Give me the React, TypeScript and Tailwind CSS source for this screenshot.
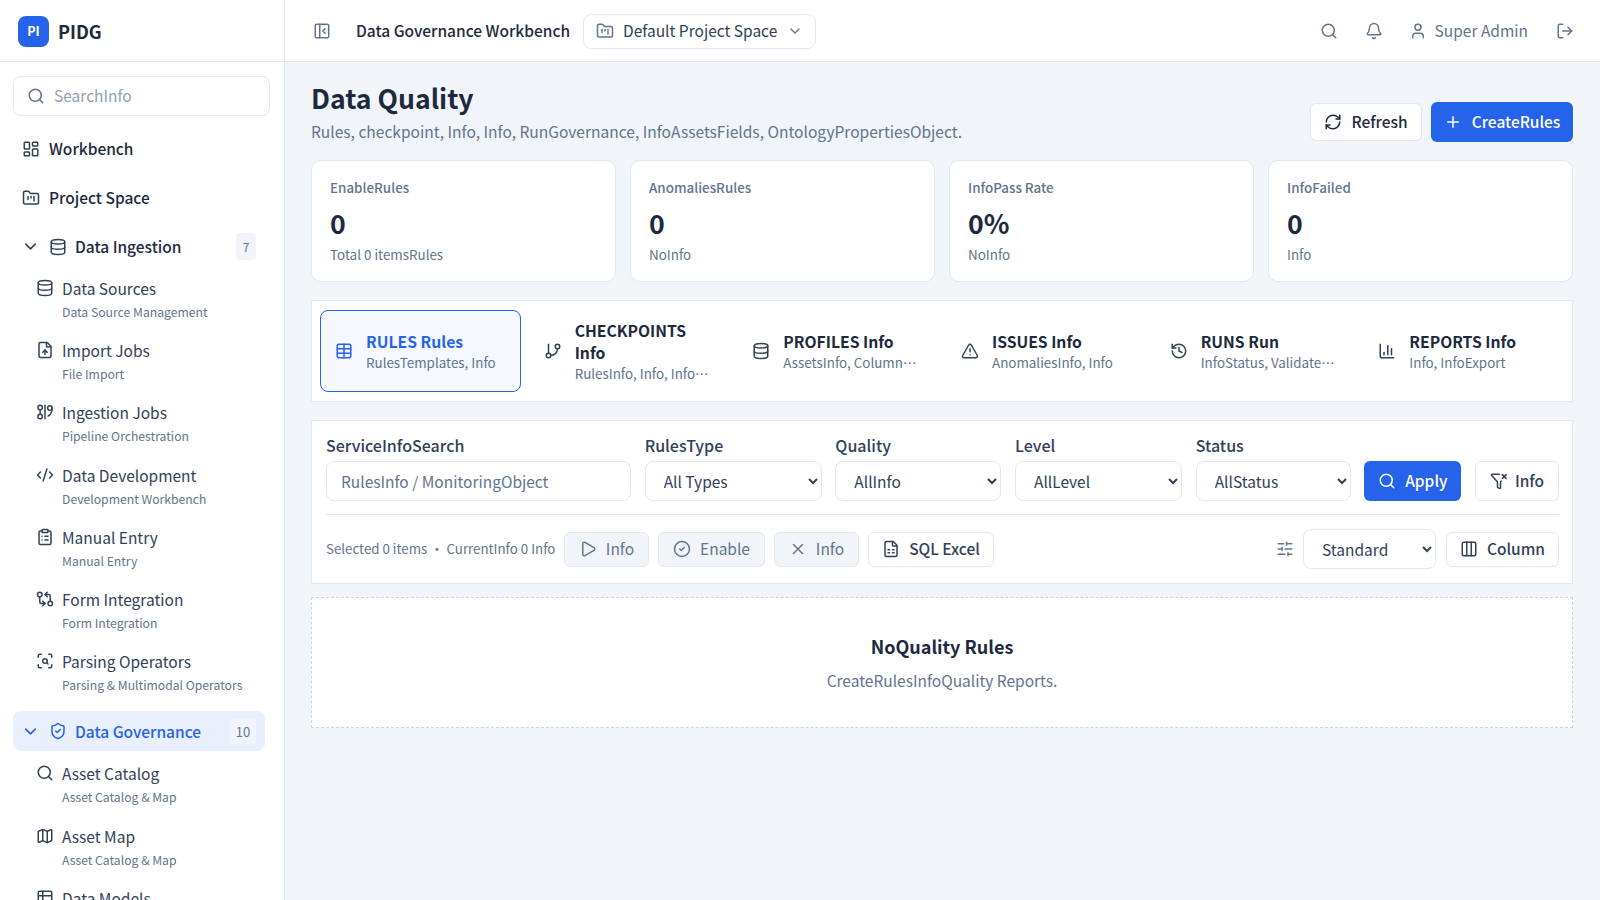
import {
  Bell,
  ChartColumn,
  ChevronDown,
  CircleCheck,
  ClipboardList,
  CodeXml,
  Columns3,
  Database,
  FileSpreadsheet,
  FileUp,
  FolderKanban,
  FunnelX,
  GitBranch,
  GitCompareArrows,
  History,
  LayoutDashboard,
  LogOut,
  Map,
  PanelLeftClose,
  Play,
  Plus,
  RefreshCw,
  ScanSearch,
  Search,
  ShieldCheck,
  SlidersHorizontal,
  Table,
  Table2,
  TriangleAlert,
  User,
  X,
} from "lucide-react";
import type { SVGProps } from "react";

const font = { fontFamily: '"Noto Sans CJK SC", "Noto Sans", sans-serif' };

// not in lucide: two stacked nodes, a rule, and a single node with a tail
function PipelineIcon(props: SVGProps<SVGSVGElement>) {
  return (
    <svg viewBox="0 0 24 24" fill="none" stroke="currentColor" strokeWidth={2} strokeLinecap="round" strokeLinejoin="round" {...props}>
      <circle cx="5.5" cy="6" r="3" />
      <circle cx="5.5" cy="18" r="3" />
      <path d="M5.5 9v6" />
      <path d="M12 3v18" />
      <circle cx="18.5" cy="6.5" r="3" />
      <path d="M21.5 6.5c0 6-2 9-5.500 11" />
    </svg>
  );
}

const ingestionItems = [
  { icon: Database, name: "Data Sources", sub: "Data Source Management" },
  { icon: FileUp, name: "Import Jobs", sub: "File Import" },
  { icon: PipelineIcon, name: "Ingestion Jobs", sub: "Pipeline Orchestration" },
  { icon: CodeXml, name: "Data Development", sub: "Development Workbench" },
  { icon: ClipboardList, name: "Manual Entry", sub: "Manual Entry" },
  { icon: GitCompareArrows, name: "Form Integration", sub: "Form Integration" },
  { icon: ScanSearch, name: "Parsing Operators", sub: "Parsing & Multimodal Operators" },
];

const governanceItems = [
  { icon: Search, name: "Asset Catalog", sub: "Asset Catalog & Map" },
  { icon: Map, name: "Asset Map", sub: "Asset Catalog & Map" },
  { icon: Table2, name: "Data Models", sub: "Data Models" },
];

const stats = [
  { label: "EnableRules", value: "0", sub: "Total 0 itemsRules" },
  { label: "AnomaliesRules", value: "0", sub: "NoInfo" },
  { label: "InfoPass Rate", value: "0%", sub: "NoInfo" },
  { label: "InfoFailed", value: "0", sub: "Info" },
];

const tabs = [
  { icon: Table, title: "RULES Rules", sub: "RulesTemplates, Info", active: true },
  { icon: GitBranch, title: "CHECKPOINTS Info", sub: "RulesInfo, Info, Info, Info" },
  { icon: Database, title: "PROFILES Info", sub: "AssetsInfo, ColumnInfo, Info" },
  { icon: TriangleAlert, title: "ISSUES Info", sub: "AnomaliesInfo, Info" },
  { icon: History, title: "RUNS Run", sub: "InfoStatus, Validate Info, Info" },
  { icon: ChartColumn, title: "REPORTS Info", sub: "Info, InfoExport" },
];

const filters = [
  { label: "RulesType", value: "All Types", width: "w-[177px]" },
  { label: "Quality", value: "AllInfo", width: "w-[166px]" },
  { label: "Level", value: "AllLevel", width: "w-[167px]" },
  { label: "Status", value: "AllStatus", width: "w-[155px]" },
];

function SubItem({ item }: { item: (typeof ingestionItems)[number] }) {
  const Icon = item.icon;
  return (
    <div className="h-[62.2px] pl-[36px] flex gap-[8px]">
      <Icon className="w-[18px] h-[18px] mt-[5px] text-slate-700 shrink-0" />
      <div>
        <div className="text-[15.5px] leading-[28px] text-slate-700">{item.name}</div>
        <div className="text-[12.2px] leading-[18px] mt-[1px] text-slate-500">{item.sub}</div>
      </div>
    </div>
  );
}

function Sidebar() {
  return (
    <aside className="w-[285px] shrink-0 h-full bg-white border-r border-slate-200 overflow-hidden">
      <div className="h-[62px] pt-[1px] border-b border-slate-200 pl-[18px] flex items-center gap-[9px]">
        <div className="w-[31px] h-[31px] rounded-[8px] bg-[#2563eb] text-white text-[12.5px] font-bold flex items-center justify-center">
          PI
        </div>
        <span className="text-[18px] font-bold text-slate-800">PIDG</span>
      </div>
      <div className="pl-[13px] pt-[14px]">
        <div className="w-[257px] h-[40px] rounded-[8px] border border-slate-200 flex items-center gap-[9px] pl-[13px]">
          <Search className="w-[18px] h-[18px] text-slate-500" />
          <span className="text-[15.5px] text-slate-400">SearchInfo</span>
        </div>
      </div>
      <div className="pt-[8px]">
        <div className="h-[49px] pl-[22px] flex items-center gap-[9px] text-slate-800 text-[15.5px] font-medium">
          <LayoutDashboard className="w-[18px] h-[18px] text-slate-700" />
          Workbench
        </div>
        <div className="h-[49px] pl-[22px] flex items-center gap-[9px] text-slate-800 text-[15.5px] font-medium">
          <FolderKanban className="w-[18px] h-[18px] text-slate-700" />
          Project Space
        </div>
        <div className="h-[49px] pl-[21px] pr-[28px] flex items-center text-slate-800 text-[15.5px] font-medium">
          <ChevronDown className="w-[19px] h-[19px] mr-[9px] text-slate-700" />
          <Database className="w-[18px] h-[18px] mr-[8px] text-slate-700" />
          <span className="flex-1">Data Ingestion</span>
          <span className="w-[20px] h-[27px] rounded-[4px] bg-slate-100 text-[12px] font-normal text-slate-500 flex items-center justify-center">
            7
          </span>
        </div>
        <div className="pt-[3px]">
          {ingestionItems.map((item) => (
            <SubItem key={item.name} item={item} />
          ))}
        </div>
        <div className="mx-[13px] w-[252px] h-[40px] mt-[2px] mb-[8px] rounded-[8px] bg-[#e9effd] pl-[8px] pr-[9px] flex items-center text-[#2563eb] text-[15.5px] font-medium">
          <ChevronDown className="w-[19px] h-[19px] mr-[9px]" />
          <ShieldCheck className="w-[18px] h-[18px] mr-[8px]" />
          <span className="flex-1">Data Governance</span>
          <span className="w-[26px] h-[26px] rounded-[4px] bg-slate-100 text-[13px] font-normal text-slate-500 flex items-center justify-center">
            10
          </span>
        </div>
        {governanceItems.map((item) => (
          <SubItem key={item.name} item={item} />
        ))}
      </div>
    </aside>
  );
}

function TopBar() {
  return (
    <header className="h-[62px] pt-[1px] shrink-0 bg-white border-b border-slate-200 flex items-center pl-[28px] pr-[26px]">
      <PanelLeftClose className="w-[18px] h-[18px] text-slate-500" />
      <span className="ml-[25px] text-[15.5px] font-medium text-slate-800 whitespace-nowrap">Data Governance Workbench</span>
      <div className="ml-[13px] w-[233px] h-[35px] rounded-[8px] border border-slate-200 flex items-center pl-[12px] text-[15.5px] text-slate-700 whitespace-nowrap">
        <FolderKanban className="w-[18px] h-[18px] text-slate-500 mr-[9px]" />
        Default Project Space
        <ChevronDown className="w-[16px] h-[16px] text-slate-500 ml-[10px]" />
      </div>
      <div className="flex-1" />
      <Search className="w-[18px] h-[18px] text-slate-500" />
      <Bell className="w-[18px] h-[18px] text-slate-500 ml-[27px]" />
      <div className="ml-[26px] flex items-center gap-[8px] text-[15.5px] text-slate-500">
        <User className="w-[18px] h-[18px]" />
        Super Admin
      </div>
      <LogOut className="w-[18px] h-[18px] text-slate-500 ml-[28px]" />
    </header>
  );
}

function MutedButton({ icon: Icon, label, width }: { icon: typeof Play; label: string; width: string }) {
  return (
    <button className={`${width} h-[35px] rounded-[6px] border border-slate-200 bg-slate-100 text-slate-500 text-[15.5px] flex items-center justify-center gap-[9px]`}>
      <Icon className="w-[18px] h-[18px]" />
      {label}
    </button>
  );
}

export default function App() {
  return (
    <div className="w-full h-screen flex overflow-hidden bg-slate-100" style={font}>
      <Sidebar />
      <div className="flex-1 min-w-0 flex flex-col">
        <TopBar />
        <main className="pl-[26px] pr-[27px] pt-[14px]">
          <div className="flex items-start justify-between h-[84px]">
            <div>
              <h1 className="text-[26.6px] leading-[43px] font-bold text-slate-800">Data Quality</h1>
              <p className="text-[15.56px] leading-[24px] text-slate-500">
                Rules, checkpoint, Info, Info, RunGovernance, InfoAssetsFields, OntologyPropertiesObject.
              </p>
            </div>
            <div className="flex gap-[9px] items-center mt-[26px]">
              <button className="w-[112px] h-[38px] rounded-[6px] border border-slate-200 bg-white text-slate-800 text-[15.5px] font-medium flex items-center justify-center gap-[9px]">
                <RefreshCw className="w-[18px] h-[18px]" />
                Refresh
              </button>
              <button className="w-[142px] h-[40px] rounded-[6px] bg-[#2563eb] text-white text-[15.5px] font-medium flex items-center justify-center gap-[10px]">
                <Plus className="w-[18px] h-[18px]" />
                CreateRules
              </button>
            </div>
          </div>

          <div className="grid grid-cols-4 gap-[14px]">
            {stats.map((s) => (
              <div key={s.label} className="h-[122px] rounded-[10px] border border-slate-200 bg-white pl-[18px] pt-[16px]">
                <div className="text-[13.4px] leading-[20px] font-medium text-slate-500">{s.label}</div>
                <div className="text-[26.7px] leading-[40px] mt-[6px] font-bold text-slate-800">{s.value}</div>
                <div className="text-[13.4px] leading-[20px] mt-[1px] text-slate-500">{s.sub}</div>
              </div>
            ))}
          </div>

          <div className="mt-[18px] h-[102px] border border-slate-200 bg-white px-[8px] py-[9px] grid grid-cols-6 gap-[8px]">
            {tabs.map((t) => {
              const Icon = t.icon;
              return (
                <div
                  key={t.title}
                  className={
                    t.active
                      ? "rounded-[8px] border border-[#2563eb] bg-[#f5f8ff] pl-[14px] pr-[18px] flex items-center gap-[13px] min-w-0"
                      : "rounded-[8px] border border-transparent pl-[14px] pr-[18px] flex items-center gap-[13px] min-w-0"
                  }
                >
                  <Icon className={t.active ? "w-[18px] h-[18px] shrink-0 text-[#2563eb]" : "w-[18px] h-[18px] shrink-0 text-slate-700"} />
                  <div className="min-w-0">
                    <div className={t.active ? "text-[15.7px] leading-[22px] font-semibold text-[#2563eb]" : "text-[15.7px] leading-[22px] font-semibold text-slate-800"}>
                      {t.title}
                    </div>
                    <div className="text-[13.4px] leading-[19px] text-slate-500 truncate">{t.sub}</div>
                  </div>
                </div>
              );
            })}
          </div>

          <div className="mt-[18px] h-[164px] border border-slate-200 bg-white pl-[14px] pr-[13px] pt-[12px]">
            <div className="flex gap-[13.7px] items-end">
              <label className="w-[305px] block">
                <div className="text-[16px] leading-[25px] font-medium text-slate-700 mb-[3px]">ServiceInfoSearch</div>
                <input
                  placeholder="RulesInfo / MonitoringObject"
                  className="w-full h-[40px] rounded-[8px] border border-slate-200 px-[14px] text-[15.5px] placeholder:text-slate-500 outline-none"
                />
              </label>
              {filters.map((f) => (
                <label key={f.label} className={`${f.width} block`}>
                  <div className="text-[16px] leading-[25px] font-medium text-slate-700 mb-[3px]">{f.label}</div>
                  <select className="w-full h-[40px] rounded-[8px] border border-slate-200 bg-white px-[14px] text-[15.5px] text-slate-700 outline-none">
                    <option>{f.value}</option>
                  </select>
                </label>
              ))}
              <button className="w-[97px] h-[40px] rounded-[6px] bg-[#2563eb] text-white text-[15.5px] font-medium flex items-center justify-center gap-[9px]">
                <Search className="w-[18px] h-[18px]" />
                Apply
              </button>
              <button className="w-[84px] h-[40px] rounded-[6px] border border-slate-200 bg-white text-slate-700 text-[15.5px] font-medium flex items-center justify-center gap-[7px]">
                <FunnelX className="w-[18px] h-[18px]" />
                Info
              </button>
            </div>
            <div className="mt-[13px] border-t border-slate-200 pt-[14px] flex items-center">
              <span className="w-[229px] text-[13.3px] text-slate-500 whitespace-nowrap">
                Selected 0 items<span className="mx-[3px]">•</span>CurrentInfo 0 Info
              </span>
              <div className="ml-[9px] flex gap-[9px]">
                <MutedButton icon={Play} label="Info" width="w-[85px]" />
                <MutedButton icon={CircleCheck} label="Enable" width="w-[107px]" />
                <MutedButton icon={X} label="Info" width="w-[85px]" />
                <button className="w-[126px] h-[35px] rounded-[6px] border border-slate-200 bg-white text-slate-700 text-[15.5px] font-medium flex items-center justify-center gap-[9px]">
                  <FileSpreadsheet className="w-[18px] h-[18px]" />
                  SQL Excel
                </button>
              </div>
              <div className="flex-1" />
              <SlidersHorizontal className="w-[18px] h-[18px] text-slate-500" />
              <select className="ml-[9px] w-[133px] h-[40px] rounded-[8px] border border-slate-200 bg-white px-[14px] text-[15.5px] text-slate-700 outline-none">
                <option>Standard</option>
              </select>
              <button className="ml-[10px] w-[113px] h-[35px] rounded-[6px] border border-slate-200 bg-white text-slate-700 text-[15.5px] font-medium flex items-center justify-center gap-[9px]">
                <Columns3 className="w-[18px] h-[18px]" />
                Column
              </button>
            </div>
          </div>

          <div className="mt-[13px] h-[131px] border border-dashed border-slate-300 bg-white flex flex-col items-center justify-center">
            <div className="text-[18px] leading-[28px] font-bold text-slate-800">NoQuality Rules</div>
            <div className="text-[15.5px] leading-[26px] mt-[7px] text-slate-500">CreateRulesInfoQuality Reports.</div>
          </div>
        </main>
      </div>
    </div>
  );
}
